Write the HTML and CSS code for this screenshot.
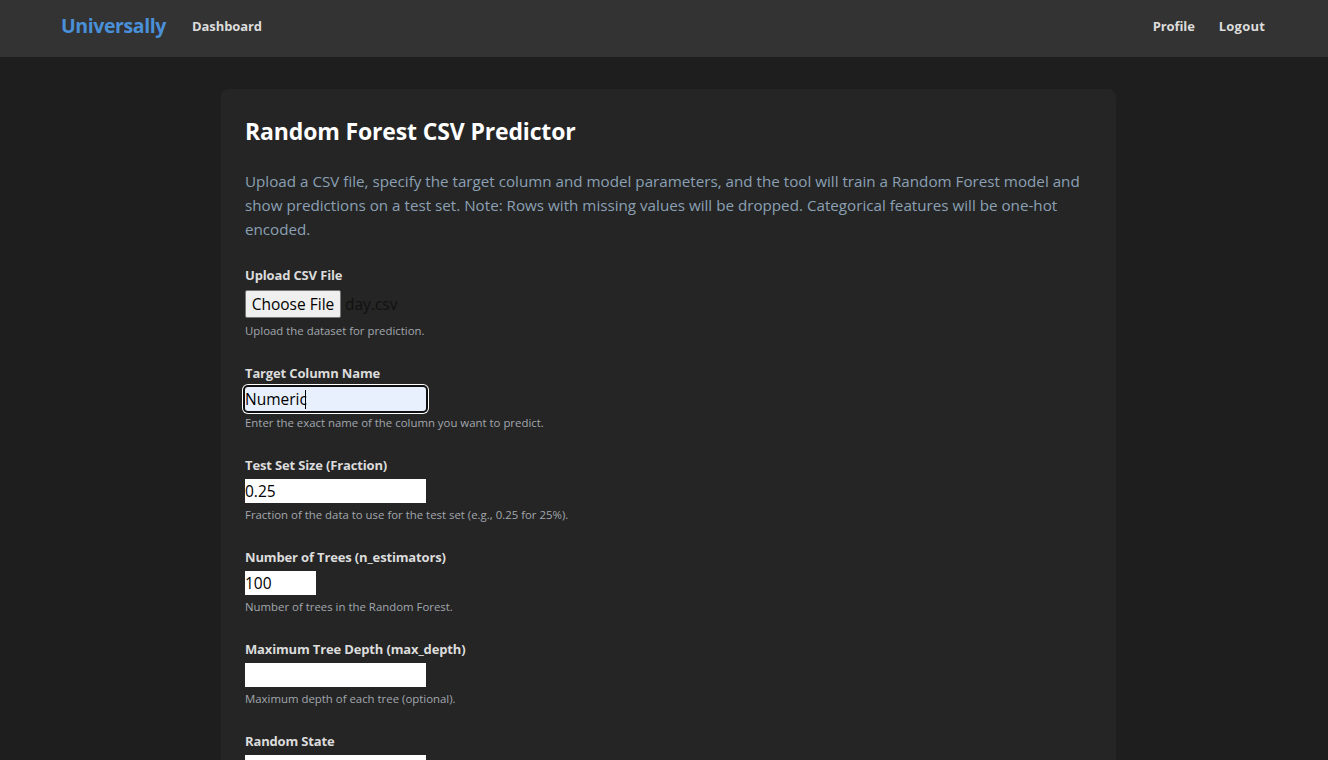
FILE: index.html
```html
<!DOCTYPE html>
<html lang="en">
<head>
<meta charset="utf-8">
<title>Random Forest CSV Predictor</title>
<link rel="stylesheet" href="styles.css">
</head>
<body>
<nav class="navbar">
  <div class="nav-left">
    <a class="brand" href="#">Universally</a>
    <a class="nav-link" href="#">Dashboard</a>
  </div>
  <div class="nav-right">
    <a class="nav-link" href="#">Profile</a>
    <a class="nav-link wide" href="#">Logout</a>
  </div>
</nav>
<main class="page">
  <section class="card">
    <h1 class="title">Random Forest CSV Predictor</h1>
    <p class="intro">Upload a CSV file, specify the target column and model parameters, and the tool will train a Random Forest model and show predictions on a test set. Note: Rows with missing values will be dropped. Categorical features will be one-hot encoded.</p>
    <form class="form">
      <div class="group file-group">
        <label class="label">Upload CSV File</label>
        <div class="file-row">
          <button type="button" class="file-btn">Choose File</button>
          <span class="file-name">day.csv</span>
        </div>
        <small class="help">Upload the dataset for prediction.</small>
      </div>
      <div class="group">
        <label class="label">Target Column Name</label>
        <div class="field-wrap">
          <input class="field focused" type="text" value="Numeric">
          <span class="caret"></span>
        </div>
        <small class="help">Enter the exact name of the column you want to predict.</small>
      </div>
      <div class="group">
        <label class="label">Test Set Size (Fraction)</label>
        <input class="field" type="text" value="0.25">
        <small class="help">Fraction of the data to use for the test set (e.g., 0.25 for 25%).</small>
      </div>
      <div class="group">
        <label class="label">Number of Trees (n_estimators)</label>
        <input class="field narrow" type="text" value="100">
        <small class="help">Number of trees in the Random Forest.</small>
      </div>
      <div class="group">
        <label class="label">Maximum Tree Depth (max_depth)</label>
        <input class="field" type="text" value="">
        <small class="help">Maximum depth of each tree (optional).</small>
      </div>
      <div class="group">
        <label class="label">Random State</label>
        <input class="field" type="text" value="">
        <small class="help">Seed for reproducibility.</small>
      </div>
    </form>
  </section>
</main>
</body>
</html>
```
FILE: styles.css
```css
* { box-sizing: border-box; }
html, body { margin: 0; padding: 0; }
body {
  background: #1e1e1e;
  font-family: "Segoe UI", "Open Sans", "Noto Sans", sans-serif;
  color: #e0e0e0;
}
.navbar {
  height: 57px;
  background: #333333;
  display: flex;
  align-items: center;
  justify-content: space-between;
  padding: 0 63px 6px 61px;
}
.nav-left, .nav-right { display: flex; align-items: center; }
.nav-left { gap: 26px; }
.nav-right { gap: 24px; }
.brand {
  color: #4a90d9;
  font-weight: 700;
  font-size: 19.5px;
  letter-spacing: -0.4px;
  text-decoration: none;
}
.nav-link {
  color: #dcdcdc;
  font-weight: 700;
  font-size: 13px;
  letter-spacing: -0.1px;
  text-decoration: none;
}
.nav-link.wide { letter-spacing: 0.2px; }
.page {
  display: flex;
  justify-content: center;
  padding-top: 32px;
}
.card {
  width: 895px;
  background: #252525;
  border-radius: 8px;
  padding: 24px 24px 40px;
  margin-left: 9px;
}
.title {
  margin: 0;
  font-size: 23px;
  letter-spacing: -0.15px;
  line-height: 36px;
  font-weight: 700;
  color: #ffffff;
}
.intro {
  margin: 20px 0 24px;
  font-size: 15.2px;
  line-height: 24px;
  color: #8ba0b4;
}
.form { display: flex; flex-direction: column; }
.group {
  display: flex;
  flex-direction: column;
  align-items: flex-start;
  margin-bottom: 23px;
}
.label {
  font-size: 13px;
  letter-spacing: -0.15px;
  line-height: 20px;
  font-weight: 700;
  color: #dcdcdc;
  margin-bottom: 4px;
}
.file-group .label { margin-bottom: 5px; }
.file-row { display: flex; align-items: center; }
.file-btn {
  height: 28px;
  width: 96px;
  padding: 0;
  background: #efefef;
  border: 1px solid #767676;
  border-radius: 2px;
  font-family: inherit;
  font-size: 15.5px;
  color: #000;
}
.file-name {
  font-size: 15.5px;
  color: #111;
  margin-left: 4px;
}
.help {
  font-size: 11.4px;
  line-height: 18px;
  color: #a2a7ae;
  margin-top: 3px;
}
.file-group .help { margin-top: 4px; }
.field-wrap { position: relative; }
.field {
  width: 181px;
  height: 24px;
  border: none;
  border-radius: 0;
  background: #ffffff;
  padding: 0;
  font-family: inherit;
  font-size: 15.5px;
  color: #000;
  outline: none;
}
.field.narrow { width: 71px; }
.field.focused {
  background: #e8f0fe;
  border-radius: 3px;
  box-shadow: 0 0 0 2px #101010, 0 0 0 3px #ffffff;
}
.caret {
  position: absolute;
  left: 60px;
  top: 3px;
  width: 1px;
  height: 19px;
  background: #000;
}
```
